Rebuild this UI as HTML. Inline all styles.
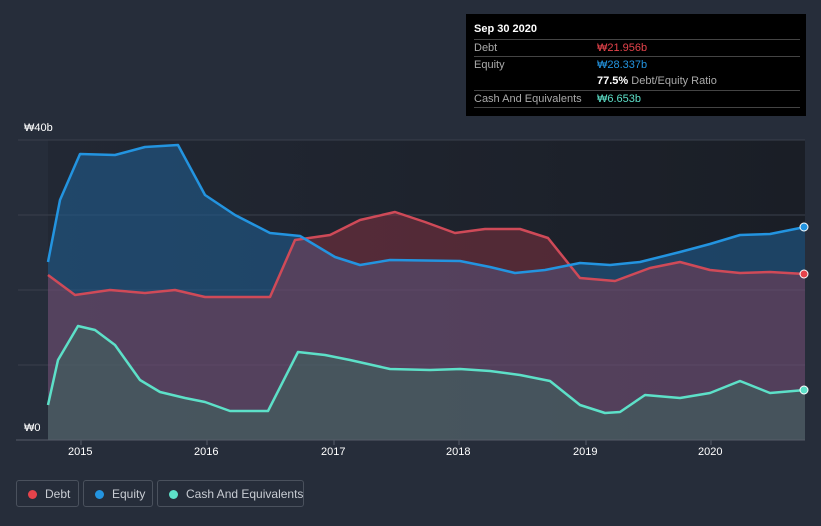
<!DOCTYPE html>
<html><head><meta charset="utf-8"><style>
body{margin:0;width:821px;height:526px;background:#262d3a;font-family:"Liberation Sans",sans-serif;overflow:hidden;position:relative}
.tt{position:absolute;left:466px;top:14px;width:340px;height:102px;background:#000;color:#fff;font-size:11px}
.tt .r{position:absolute;left:8px;width:326px;border-top:1px solid #444;height:17px;line-height:17px;color:#aaa}
.lg{position:absolute;top:480px;height:27px;border:1px solid #4a515d;border-radius:3px;color:#c8ccd3;font-size:12px;line-height:27px;box-sizing:border-box;white-space:nowrap}
.lg i{position:absolute;left:11px;top:9px;width:9px;height:9px;border-radius:50%}
.ax{position:absolute;color:#fff;font-size:11px}
</style></head><body>
<svg width="821" height="526" style="position:absolute;left:0;top:0" stroke-linejoin="round">
<defs><linearGradient id="bg" x1="0" y1="0" x2="1" y2="0"><stop offset="0" stop-color="#222834"/><stop offset="1" stop-color="#1a1e26"/></linearGradient></defs>
<rect x="48" y="140" width="757" height="300" fill="url(#bg)"/>
<g stroke="#3a404c" stroke-width="1"><line x1="18" y1="140" x2="805" y2="140"/><line x1="18" y1="215" x2="805" y2="215"/><line x1="18" y1="290" x2="805" y2="290"/><line x1="18" y1="365" x2="805" y2="365"/></g>
<path d="M48,262 L60,200 L80,154 L115,155 L145,147 L178,145 L205,195 L235,215 L270,233 L300,236 L335,257 L360,265 L390,260 L460,261 L490,267 L515,273 L545,270 L580,263 L610,265 L640,262 L680,252 L710,244 L740,235 L770,234 L805,227 L805,440 L48,440Z" fill="#205b8d" fill-opacity="0.6"/>
<path d="M48,275 L75,295 L110,290 L145,293 L175,290 L205,297 L270,297 L295,240 L330,235 L360,220 L395,212 L425,222 L455,233 L485,229 L520,229 L548,238 L580,278 L615,281 L650,268 L680,262 L710,270 L740,273 L770,272 L805,274 L805,440 L48,440Z" fill="#b8394a" fill-opacity="0.35"/>
<path d="M48,275 L75,295 L110,290 L145,293 L175,290 L205,297 L270,297 L295,240 L330,235 L360,220 L395,212 L425,222 L455,233 L485,229 L520,229 L548,238 L580,278 L615,281 L650,268 L680,262 L710,270 L740,273 L770,272 L805,274" fill="none" stroke="#cf4a58" stroke-width="2.5"/>
<path d="M48,262 L60,200 L80,154 L115,155 L145,147 L178,145 L205,195 L235,215 L270,233 L300,236 L335,257 L360,265 L390,260 L460,261 L490,267 L515,273 L545,270 L580,263 L610,265 L640,262 L680,252 L710,244 L740,235 L770,234 L805,227" fill="none" stroke="#2394e0" stroke-width="2.5"/>
<path d="M48,405 L58,360 L78,326 L95,330 L115,345 L140,380 L160,392 L185,398 L205,402 L230,411 L268,411 L298,352 L325,355 L350,360 L390,369 L430,370 L460,369 L490,371 L520,375 L550,381 L580,405 L605,413 L620,412 L645,395 L680,398 L710,393 L740,381 L770,393 L805,390 L805,440 L48,440Z" fill="#34735f" fill-opacity="0.4"/>
<path d="M48,405 L58,360 L78,326 L95,330 L115,345 L140,380 L160,392 L185,398 L205,402 L230,411 L268,411 L298,352 L325,355 L350,360 L390,369 L430,370 L460,369 L490,371 L520,375 L550,381 L580,405 L605,413 L620,412 L645,395 L680,398 L710,393 L740,381 L770,393 L805,390" fill="none" stroke="#5de0c8" stroke-width="2.5"/>
<line x1="16" y1="440" x2="805" y2="440" stroke="#555c68"/>
<g stroke="#555c68"><line x1="81" y1="440" x2="81" y2="445"/><line x1="207" y1="440" x2="207" y2="445"/><line x1="334" y1="440" x2="334" y2="445"/><line x1="459" y1="440" x2="459" y2="445"/><line x1="586" y1="440" x2="586" y2="445"/><line x1="711" y1="440" x2="711" y2="445"/></g>
<circle cx="804" cy="227" r="4" fill="#2394e0" stroke="#fff" stroke-width="1"/>
<circle cx="804" cy="274" r="4" fill="#e5434b" stroke="#fff" stroke-width="1"/>
<circle cx="804" cy="390" r="4" fill="#5de0c8" stroke="#fff" stroke-width="1"/>
</svg>
<div class="ax" style="left:24px;top:122px">₩40b</div>
<div class="ax" style="left:24px;top:422px">₩0</div>
<div class="ax" style="left:68px;top:446px">2015</div>
<div class="ax" style="left:194px;top:446px">2016</div>
<div class="ax" style="left:321px;top:446px">2017</div>
<div class="ax" style="left:446px;top:446px">2018</div>
<div class="ax" style="left:573px;top:446px">2019</div>
<div class="ax" style="left:698px;top:446px">2020</div>
<div class="tt">
<div style="position:absolute;left:8px;top:9px;font-weight:bold">Sep 30 2020</div>
<div class="r" style="top:25px">Debt<span style="position:absolute;left:123px;color:#e5434b">₩21.956b</span></div>
<div class="r" style="top:42px">Equity<span style="position:absolute;left:123px;color:#2394e0">₩28.337b</span></div>
<div class="r" style="top:59px;border-top:none"><span style="position:absolute;left:123px"><b style="color:#fff">77.5%</b> Debt/Equity Ratio</span></div>
<div class="r" style="top:76px">Cash And Equivalents<span style="position:absolute;left:123px;color:#5de0c8">₩6.653b</span></div>
<div class="r" style="top:93px;height:0"></div>
</div>
<div class="lg" style="left:16px;width:63px"><i style="background:#e5434b"></i><span style="position:absolute;left:28px">Debt</span></div>
<div class="lg" style="left:83px;width:70px"><i style="background:#2394e0"></i><span style="position:absolute;left:28px">Equity</span></div>
<div class="lg" style="left:157px;width:147px"><i style="background:#5de0c8"></i><span style="position:absolute;left:28px">Cash And Equivalents</span></div>
</body></html>
